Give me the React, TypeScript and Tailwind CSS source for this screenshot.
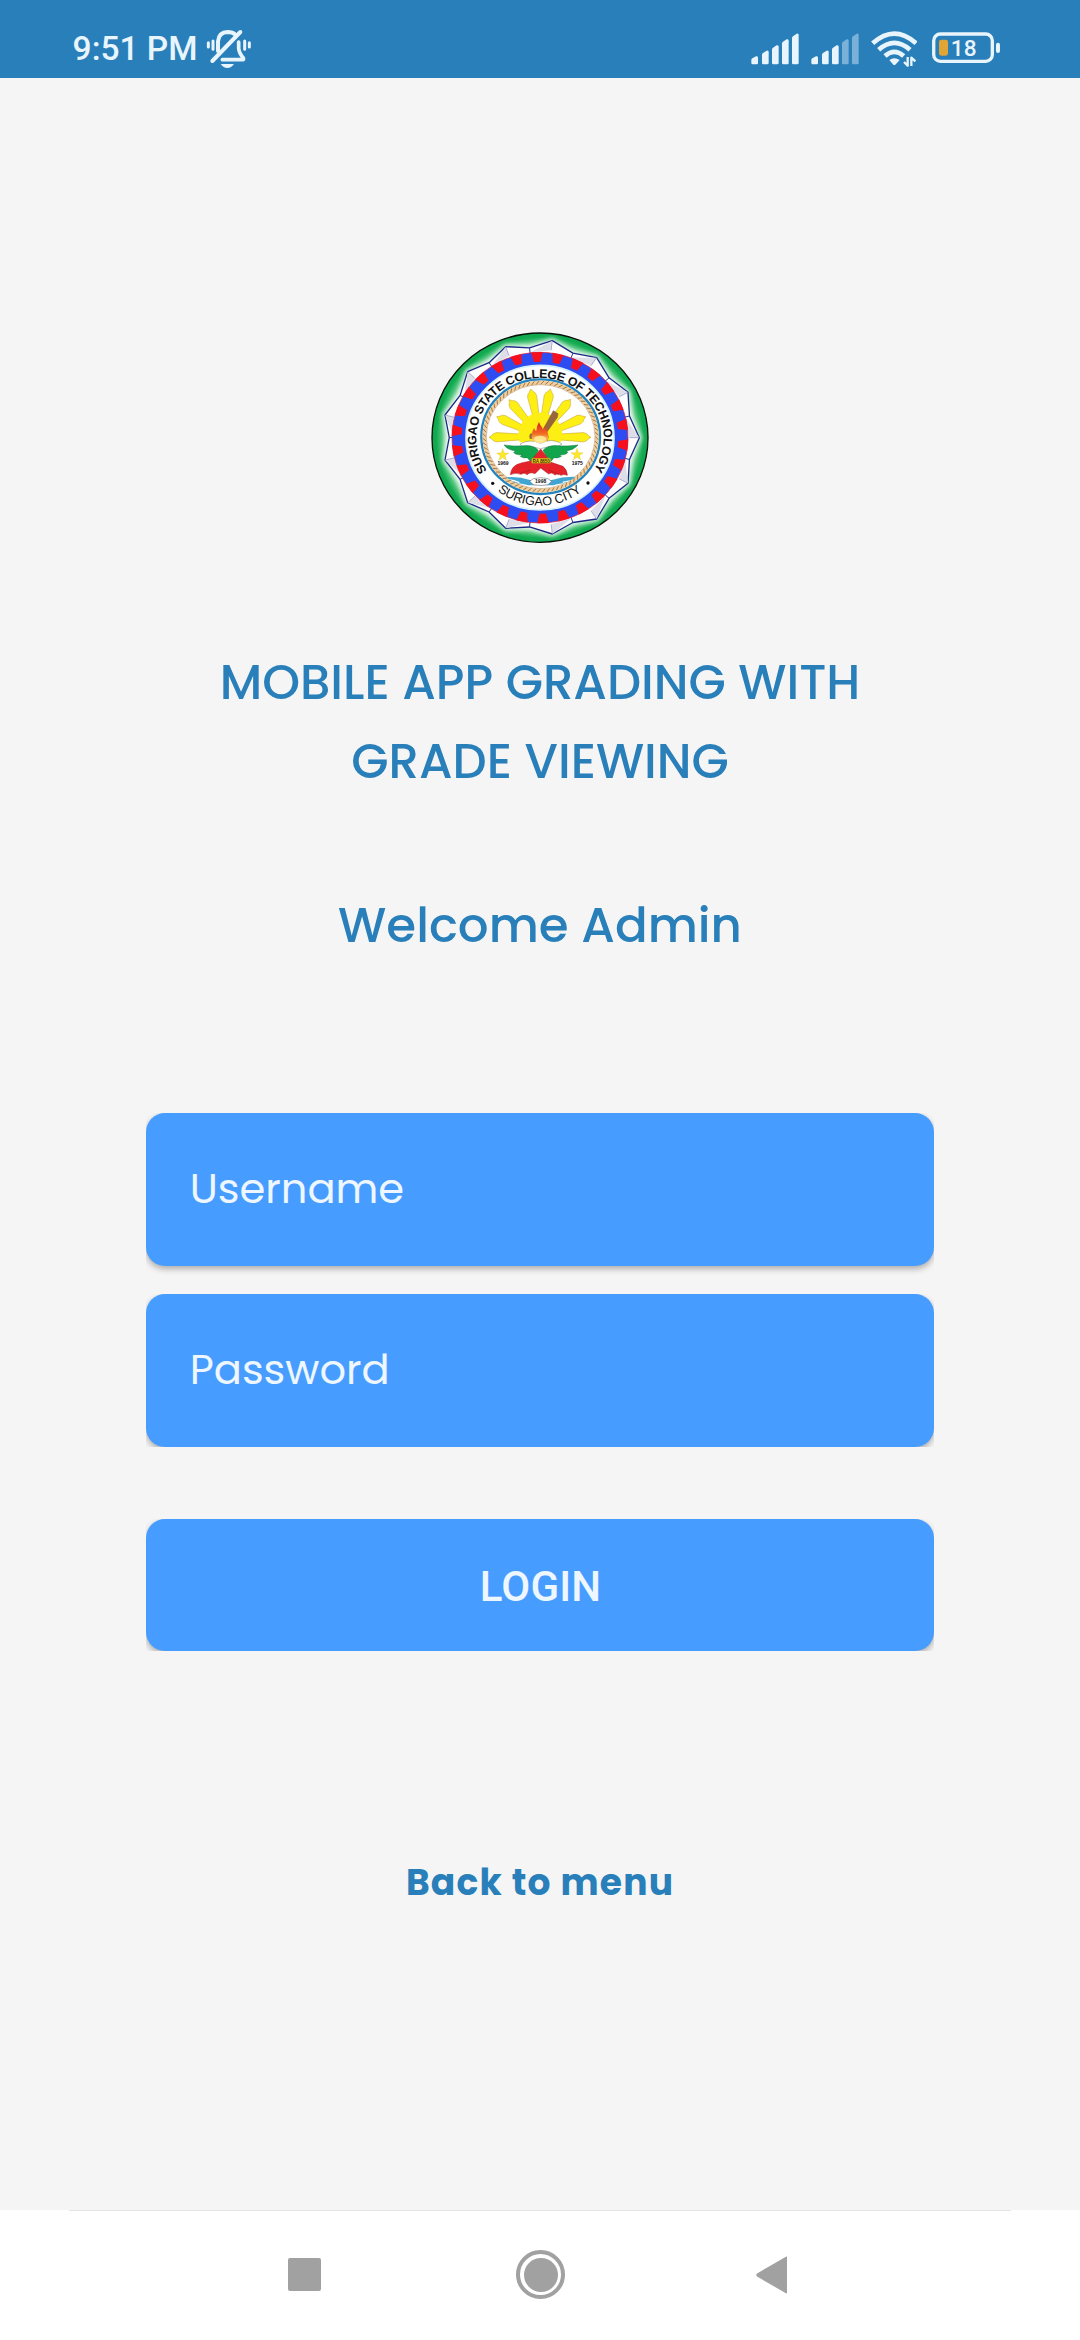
import React from "react";

const CX = 360;
const CY = 353;

function pt(deg: number, rx: number, ry: number, cx = CX, cy = CY) {
  const a = (deg * Math.PI) / 180;
  return `${(cx + rx * Math.sin(a)).toFixed(1)},${(cy - ry * Math.cos(a)).toFixed(1)}`;
}

const starTips: [number, number][] = [
  [397, 62], [530, 113], [624, 217], [658, 353], [624, 490], [530, 597], [397, 642],
  [257, 625], [143, 548], [75, 420], [75, 285], [143, 155], [257, 80],
];
const starValleys = starTips.map((t, i) => {
  const n = starTips[(i + 1) % starTips.length];
  const mx = (t[0] + n[0]) / 2 - CX;
  const my = (t[1] + n[1]) / 2 - CY;
  return [CX + mx * 0.955, CY + my * 0.955];
});
const starOutline = starTips
  .map((t, i) => `${t[0]},${t[1]} ${starValleys[i][0].toFixed(1)},${starValleys[i][1].toFixed(1)}`)
  .join(" ");

const teeth = Array.from({ length: 26 }, (_, i) => {
  const a = -2 + (i * 360) / 26;
  return [pt(a - 3.8, 265, 257), pt(a + 3.8, 265, 257), pt(a + 2.4, 235, 228), pt(a - 2.4, 235, 228)].join(" ");
});

const ropeStrands = Array.from({ length: 76 }, (_, i) => {
  const a = (i * 360) / 76;
  return `M${pt(a, 164, 157, 362, 350)} L${pt(a + 3.2, 174, 167, 362, 350)}`;
}).join(" ");

const rayTips: [number, number][] = [
  [207, 352], [230, 290], [267, 239], [332, 207], [391, 207], [452, 238], [497, 290], [513, 352],
];
const rays = rayTips.map(([x, y]) => {
  const ox = 360, oy = 350;
  const dx = x - ox, dy = y - oy;
  const len = Math.hypot(dx, dy);
  const ux = dx / len, uy = dy / len;
  const p = (l: number, w: number) =>
    `${(ox + ux * l - uy * w).toFixed(1)},${(oy + uy * l + ux * w).toFixed(1)}`;
  return [p(30, -7), p(len - 22, -14), p(len - 12, -10), p(len - 9, -6), p(len, 0), p(len - 9, 6), p(len - 12, 10), p(len - 22, 14), p(30, 7)].join(" ");
});

function Star({ x, y }: { x: number; y: number }) {
  const pts = Array.from({ length: 10 }, (_, i) => pt(i * 36, i % 2 ? 7.5 : 19, i % 2 ? 7.5 : 19, x, y)).join(" ");
  return <polygon points={pts} fill="#fbe92a" stroke="#e0b82c" strokeWidth="1" />;
}

function Seal() {
  return (
    <svg viewBox="0 0 720 705" className="h-[235px] w-[240px]" aria-label="Surigao State College of Technology">
      <defs>
        <radialGradient id="field" cx="50%" cy="50%" r="50%">
          <stop offset="0.84" stopColor="#d8f3df" />
          <stop offset="0.91" stopColor="#4fc47a" />
          <stop offset="0.96" stopColor="#12ab51" />
          <stop offset="1" stopColor="#0fa64c" />
        </radialGradient>
        <filter id="halo" x="-10%" y="-10%" width="120%" height="120%">
          <feGaussianBlur stdDeviation="8" />
        </filter>
        <linearGradient id="flame" x1="0" y1="0" x2="0" y2="1">
          <stop offset="0" stopColor="#dc1f26" />
          <stop offset="0.55" stopColor="#f26a21" />
          <stop offset="1" stopColor="#fff08a" />
        </linearGradient>
        <path id="nameArc" d={`M${pt(-124, 191, 179)} A191,179 0 1 1 ${pt(124, 191, 179)}`} />
        <path id="cityArc" d={`M${pt(219, 205, 204)} A205,204 0 0 0 ${pt(141, 205, 204)}`} />
        <clipPath id="core"><ellipse cx="362" cy="350" rx="164" ry="156" /></clipPath>
      </defs>

      <ellipse cx="360" cy="353" rx="324" ry="314" fill="url(#field)" />
      <polygon points={starOutline} fill="none" stroke="#fff" strokeWidth="14" strokeLinejoin="round" filter="url(#halo)" />
      <ellipse cx="360" cy="353" rx="324" ry="314" fill="none" stroke="#08110a" strokeWidth="4" />
      <polygon points={starOutline} fill="#fdfdff" stroke="#1c2a86" strokeWidth="4" strokeLinejoin="round" />
      {starTips.map(([x, y], i) => {
        const fx = CX + (x - CX) * 0.9, fy = CY + (y - CY) * 0.9;
        const v = starValleys[i];
        const w = starValleys[(i + 12) % 13];
        const q = (s: number[], k: number) => `${CX + (s[0] - CX) * k},${CY + (s[1] - CY) * k}`;
        return (
          <g key={i}>
            <polygon points={`${x},${y} ${fx},${fy} ${q(w, 0.95)}`} fill="#dedee8" />
            <path d={`M${q(v, 1)} L${q(v, 0.92)}`} stroke="#2a3690" strokeWidth="3" />
            <path d={`M${x},${y} L${fx},${fy}`} stroke="#6670ac" strokeWidth="1.5" />
          </g>
        );
      })}

      <ellipse cx="360" cy="353" rx="264" ry="256" fill="#2d4df2" stroke="#ea1020" strokeWidth="2" />
      {teeth.map((t, i) => <polygon key={i} points={t} fill="#f60f1c" />)}
      <ellipse cx="360" cy="353" rx="222" ry="217" fill="#fff" stroke="#d3f2fb" strokeWidth="5" />

      <text fontFamily="Liberation Sans, sans-serif" fontWeight="700" fontSize="37" fill="#101010">
        <textPath href="#nameArc" startOffset="1" textLength="790" lengthAdjust="spacing">SURIGAO STATE COLLEGE OF TECHNOLOGY</textPath>
      </text>
      <text fontFamily="Liberation Sans, sans-serif" fontSize="38" fill="#101010">
        <textPath href="#cityArc" startOffset="2" textLength="272" lengthAdjust="spacing">SURIGAO CITY</textPath>
      </text>
      <circle cx="218" cy="490" r="5" fill="#101010" />
      <circle cx="504" cy="489" r="5" fill="#101010" />

      <ellipse cx="362" cy="350" rx="178" ry="172" fill="#f8eedb" stroke="#2484c0" strokeWidth="7" />
      <ellipse cx="362" cy="350" rx="169" ry="162" fill="#fff" stroke="#efcfa0" strokeWidth="11" />
      <path d={ropeStrands} stroke="#a8763f" strokeWidth="3" fill="none" />
      <ellipse cx="362" cy="350" rx="163" ry="156" fill="none" stroke="#b58450" strokeWidth="1.5" />

      {rays.map((r, i) => (
        <polygon key={i} points={r} fill="#fdee13" stroke="#c09a3a" strokeWidth="1.5" strokeLinejoin="round" />
      ))}
      <path d="M299,367 A66,66 0 1 1 423,367 Z" fill="#fdee13" />

      <g clipPath="url(#core)">
        <path d="M240,474 Q290,466 330,480 L395,480 Q440,466 484,472 L484,490 Q430,484 400,496 L325,496 Q290,484 240,490Z" fill="#41a5d1" />
        <path d="M240,481 q32,-6 58,7 M428,487 q32,-9 60,-2" stroke="#fff" strokeWidth="4" fill="none" />
      </g>

      <path d="M300,372 Q330,355 362,370 Q396,352 426,372 L410,382 Q385,376 362,386 Q336,376 312,384Z" fill="#fff" stroke="#777" strokeWidth="1.5" />
      <path d="M400,272 L414,281 L412,292 L374,346 L363,340Z" fill="#99663c" stroke="#75502f" strokeWidth="1.5" />
      <path d="M329,356 Q325,340 337,340 L382,338 Q389,350 382,363Z" fill="#9a683b" />
      <path d="M357,306 C362,319 368,321 369,330 Q375,326 374,317 Q387,341 384,356 Q379,369 360,369 Q337,369 335,352 Q334,336 342,324 Q345,334 349,332 Q349,319 357,306Z" fill="url(#flame)" />
      <ellipse cx="360" cy="356" rx="18" ry="9" fill="#fff39a" opacity="0.8" />

      <path d="M252,375 Q284,380 312,377 Q342,375 355,391 L347,407 L331,424 L322,413 Q309,416 301,409 L307,405 Q285,405 281,397 L287,393 Q263,390 252,375Z" fill="#12a54b" stroke="#137440" strokeWidth="1.5" />
      <path d="M474,375 Q440,380 413,377 Q383,375 369,391 L378,407 L393,424 L402,413 Q415,416 424,409 L418,405 Q439,405 444,397 L438,393 Q462,390 474,375Z" fill="#12a54b" stroke="#137440" strokeWidth="1.5" />
      <path d="M362,387 L393,427 L429,439 Q442,450 442,466 Q430,461 423,466 Q412,458 405,465 Q395,455 386,462 L362,444 L345,461 Q330,455 322,464 Q311,456 303,463 Q288,456 271,464 Q273,436 304,429 L332,423Z" fill="#e52129" stroke="#a91b22" strokeWidth="1.5" strokeLinejoin="round" />
      <path d="M331,450 L302,460 M386,450 L417,464" stroke="#a91b22" strokeWidth="2" />
      <rect x="335" y="415" width="57" height="15" rx="2" fill="#f5d91c" stroke="#94721a" strokeWidth="1" />
      <text x="363.500" y="428" textAnchor="middle" fontFamily="Liberation Sans, sans-serif" fontWeight="700" fontSize="14" fill="#3b2a08" textLength="52">RA 8650</text>
      <Star x={248} y={405} />
      <Star x={471} y={404} />
      <g fontFamily="Liberation Sans, sans-serif" fontWeight="700" fontSize="15" fill="#111" textAnchor="middle">
        <text x="249" y="434">1969</text>
        <text x="472" y="434">1975</text>
      </g>
      <path d="M329,484 L340,476 Q362,470 384,476 L395,484 L384,494 Q362,499 340,494Z" fill="#fff" stroke="#555" strokeWidth="1.5" />
      <text x="362" y="490" textAnchor="middle" fontFamily="Liberation Sans, sans-serif" fontWeight="700" fontSize="15" fill="#111">1998</text>
    </svg>
  );
}

function SilentIcon() {
  return (
    <svg viewBox="0 0 140 120" className="ml-[8px] mt-[29px] h-[40px] w-[46.7px]" fill="none" stroke="#e9f5fd" strokeLinecap="round">
      <path d="M7,41 V54 M21,36 V61 M116,36 V61 M130,41 V54" strokeWidth="9" />
      <path d="M36,66 V37 Q38,10 65,9 Q80,9 88,17" strokeWidth="12" />
      <path d="M98,39 V58 Q99,72 112,87 Q114,92 110,92 H49" strokeWidth="11" strokeLinejoin="round" />
      <path d="M19,96 L103,9" strokeWidth="12" />
      <path d="M44,105 H84 Q76,117 64,117 Q52,117 44,105Z" fill="#e9f5fd" stroke="none" />
    </svg>
  );
}

function Signal({ weak = false }: { weak?: boolean }) {
  const bars = [[0, 70, 76], [32, 53, 60], [62, 37, 44], [92, 19, 26], [122, 2, 10]];
  return (
    <svg viewBox="0 0 144 96" className="h-[32px] w-[48px]">
      {bars.map(([x, t, s], i) => (
        <path
          key={x}
          d={`M${x + 1},${s + 5} Q${x + 1},${s + 2} ${x + 4},${s} L${x + 15},${t} Q${x + 21},${t - 2} ${x + 21},${t + 4} V90 Q${x + 21},94 ${x + 17},94 H${x + 5} Q${x + 1},94 ${x + 1},90Z`}
          fill={weak && i > 2 ? "#7ab1d8" : "#e9f5fd"}
        />
      ))}
    </svg>
  );
}

function Wifi() {
  return (
    <svg viewBox="0 0 140 110" className="h-[36.700px] w-[46.700px]" fill="none" stroke="#e9f5fd">
      <path d="M5,37 Q70,-21 135,37" strokeWidth="14" />
      <path d="M23,56 Q70,15 117,56" strokeWidth="14" />
      <path d="M42,75 Q70,50 98,75" strokeWidth="14" />
      <path d="M55,87 Q70,76 86,87 L73,101 Q70,103 67,101Z" fill="#e9f5fd" stroke="none" />
      <path d="M110,78 V104 L99,93 M121,105 V80 L133,91" strokeWidth="7" strokeLinejoin="round" />
    </svg>
  );
}

function Battery() {
  return (
    <svg viewBox="0 0 206 94" className="h-[31.300px] w-[68.700px]">
      <rect x="5" y="6" width="176" height="82" rx="20" fill="none" stroke="#e9f5fd" strokeWidth="10" />
      <rect x="192" y="32" width="12" height="31" rx="6" fill="#e9f5fd" />
      <rect x="21" y="23" width="27" height="48" rx="7" fill="#e0a535" />
      <text x="95" y="73" textAnchor="middle" fontFamily="Roboto, sans-serif" fontWeight="500" fontSize="68" fill="#e9f5fd">18</text>
    </svg>
  );
}

function Field({ label, clip }: { label: string; clip: string }) {
  return (
    <div className={`h-[153px] w-[788px] ${clip}`}>
      <div className="flex h-full w-full items-center rounded-[19px] bg-[#479dff] pl-[43.700px] pb-[2px] shadow-[0_3px_6px_rgba(0,0,0,0.3)]">
        <span className="whitespace-nowrap font-[Poppins,Inter,sans-serif] text-[41.600px] leading-[60px] text-[#eef6ff]">
          {label}
        </span>
      </div>
    </div>
  );
}

export default function App() {
  return (
    <div className="flex h-[2340px] w-[1080px] flex-col overflow-hidden bg-[#f5f5f5]">
      <header className="flex h-[78px] shrink-0 items-start bg-[#297fb9] pl-[72.600px]">
        <span className="mt-[29px] w-[125px] whitespace-nowrap font-[Roboto,sans-serif] text-[33.500px] font-medium leading-[40px] text-[#e9f5fd]">9:51 PM</span>
        <SilentIcon />
        <div className="ml-auto mr-[79.600px] flex items-start">
          <div className="mt-[32.500px] flex gap-[12px]"><Signal /><Signal weak /></div>
          <div className="ml-[12px] mt-[31px]"><Wifi /></div>
          <div className="ml-[14.500px] mt-[32px]"><Battery /></div>
        </div>
      </header>

      <main className="flex h-[2132px] shrink-0 flex-col items-center font-[Poppins,Inter,sans-serif] text-[#297fb9]">
        <div className="mt-[242px]"><Seal /></div>
        <h1 className="mt-[88px] whitespace-nowrap text-center text-[48.200px] font-medium leading-[79px]">
          <span className="block">MOBILE APP GRADING WITH</span>
          <span className="block">GRADE VIEWING</span>
        </h1>
        <h2 className="mt-[84px] whitespace-nowrap text-[48.300px] font-medium leading-[80px]">Welcome Admin</h2>
        <form className="mt-[148px] flex flex-col">
          <Field label="Username" clip="[clip-path:inset(0_0_-14px_0)]" />
          <div className="mt-[28px]"><Field label="Password" clip="overflow-hidden" /></div>
          <div className="mt-[72px] h-[132px] w-[788px] overflow-hidden">
            <button type="button" className="flex h-full w-full items-center justify-center rounded-[19px] bg-[#479dff] pt-[2px] pl-[1px] shadow-[0_3px_6px_rgba(0,0,0,0.3)] font-[Roboto,sans-serif] text-[42px] font-medium tracking-[0.2px] text-[#eef6ff]">
              LOGIN
            </button>
          </div>
        </form>
        <a className="mt-[202px] whitespace-nowrap text-[36px] font-bold leading-[60px] tracking-[1.2px]">Back to menu</a>
      </main>

      <nav className="flex h-[130px] shrink-0 flex-col items-center bg-white">
        <div className="h-px w-[942px] bg-[#e4e4e4]" />
        <div className="flex w-full items-center pt-[39px] pl-[288px]">
          <div className="h-[33px] w-[33px] rounded-[2px] bg-[#a1a1a1]" />
          <div className="ml-[195px] flex h-[49px] w-[49px] items-center justify-center rounded-full border-4 border-[#a1a1a1]">
            <div className="h-[34px] w-[34px] rounded-full bg-[#a1a1a1]" />
          </div>
          <svg viewBox="0 0 32 38" className="ml-[190.500px] h-[38px] w-[32px]">
            <path d="M31,1.500 V36.500 Q31,38 29.500,37 L1,20.500 Q-0.500,19 1,17.500 L29.500,1 Q31,0 31,1.500Z" fill="#a1a1a1" />
          </svg>
        </div>
      </nav>
    </div>
  );
}
